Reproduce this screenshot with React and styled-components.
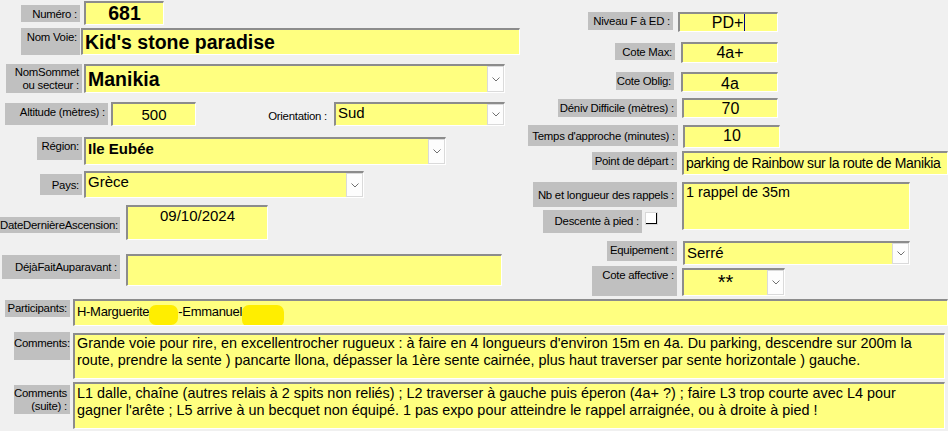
import React from "react";
import styled, { createGlobalStyle } from "styled-components";

const GlobalStyle = createGlobalStyle`
  html, body {
    margin: 0;
    padding: 0;
    background: #f0f0f0;
    overflow: hidden;
  }
`;

const Form = styled.div`
  width: 948px;
  height: 431px;
  background: #f0f0f0;
  display: flex;
  flex-direction: column;
`;

const Top = styled.div`
  display: flex;
  height: 293px;
`;

const Column = styled.div`
  display: flex;
  flex-direction: column;
  width: ${(p) => p.$w}px;
  flex-shrink: 0;
`;

const Row = styled.div`
  display: flex;
  align-items: flex-start;
  margin-top: ${(p) => p.$mt || 0}px;
`;

const Label = styled.div`
  box-sizing: border-box;
  flex-shrink: 0;
  width: ${(p) => p.$w}px;
  height: ${(p) => p.$h}px;
  margin-left: ${(p) => p.$ml || 0}px;
  margin-top: ${(p) => p.$dy || 0}px;
  padding: ${(p) => p.$pt ?? 3}px 3px 0 0;
  background: ${(p) => (p.$plain ? "transparent" : "#c0c0c0")};
  font-family: "Liberation Sans", Arial, sans-serif;
  font-size: 11.4px;
  letter-spacing: -0.25px;
  line-height: 13px;
  color: #000;
  text-align: right;
  white-space: nowrap;
`;

const Field = styled.div`
  box-sizing: border-box;
  flex-shrink: 0;
  width: ${(p) => p.$w}px;
  height: ${(p) => p.$h}px;
  margin-left: ${(p) => p.$ml || 0}px;
  margin-top: ${(p) => p.$dy || 0}px;
  background: #ffff80;
  border-top: 2px solid #8c8c8c;
  border-left: 2px solid #8c8c8c;
  border-right: 1px solid #ffffff;
  border-bottom: 1px solid #ffffff;
  display: flex;
  align-items: stretch;
  overflow: hidden;
  font-family: "Liberation Sans", Arial, sans-serif;
  font-size: ${(p) => p.$size || 15}px;
  font-weight: ${(p) => (p.$bold ? 700 : 400)};
  color: #000;
`;

const Value = styled.div`
  flex: 1;
  padding: ${(p) => p.$pt ?? 1}px 2px 0 ${(p) => p.$pl ?? 2}px;
  text-align: ${(p) => p.$align || "left"};
  line-height: ${(p) => p.$lh || 17}px;
  white-space: ${(p) => (p.$wrap ? "pre" : "nowrap")};
  letter-spacing: ${(p) => p.$ls || 0}px;
`;

const Caret = styled.span`
  display: inline-block;
  width: 0;
  height: 17px;
  border-left: 1px solid #000080;
  vertical-align: top;
  margin-left: 1px;
`;

const DropButton = styled.div`
  box-sizing: border-box;
  flex-shrink: 0;
  width: 17px;
  background: #fdfdfd;
  border: 1px solid #dadada;
  display: flex;
  align-items: center;
  justify-content: center;
`;

const Blot = styled.span`
  display: inline-block;
  vertical-align: top;
  width: ${(p) => p.$w}px;
  height: ${(p) => p.$h}px;
  margin-top: 2px;
  background: #ffee00;
  border-radius: 7px;
`;

const Stack = styled.div`
  display: flex;
  flex-direction: column;
  align-items: flex-end;
  width: ${(p) => p.$w}px;
  margin-left: ${(p) => p.$ml || 0}px;
  flex-shrink: 0;
`;

const SubRow = styled.div`
  display: flex;
  align-items: flex-start;
  width: 100%;
  margin-top: ${(p) => p.$mt || 0}px;
`;

const CheckBox = styled.div`
  box-sizing: border-box;
  width: 13px;
  height: 13px;
  margin-left: 3px;
  margin-top: 2px;
  background: #ffffff;
  border: 1px solid #d8d8d8;
  box-shadow: inset -2px -2px 0 -1px #000;
`;

const Bottom = styled.div`
  display: flex;
  flex-direction: column;
  margin-top: 6px;
`;

function Chevron() {
  return (
    <svg width="8" height="5" viewBox="0 0 8 5">
      <polyline points="0.5,0.5 4,4 7.5,0.5" fill="none" stroke="#707070" strokeWidth="1" />
    </svg>
  );
}

function Combo({ children, ...props }) {
  return (
    <Field {...props}>
      {children}
      <DropButton>
        <Chevron />
      </DropButton>
    </Field>
  );
}

export default function App() {
  return (
    <>
      <GlobalStyle />
      <Form>
        <Top>
          <Column $w={520}>
            <Row $mt={1}>
              <Label $ml={21} $w={59} $h={17} $dy={4}>Numéro :</Label>
              <Field $ml={4} $w={80} $h={24} $size={19.5} $bold>
                <Value $align="center" $lh={21} $pt={0}>681</Value>
              </Field>
            </Row>
            <Row $mt={3}>
              <Label $ml={21} $w={59} $h={27}>Nom Voie:</Label>
              <Field $ml={1} $w={439} $h={27} $size={19.5} $bold>
                <Value $lh={22} $pt={1}>Kid's stone paradise</Value>
              </Field>
            </Row>
            <Row $mt={9}>
              <Label $ml={6} $w={76} $h={29} $pt={2}>
                NomSommet
                <br />
                ou secteur :
              </Label>
              <Combo $ml={2} $w={421} $h={29} $size={19.5} $bold>
                <Value $lh={22} $pt={2}>Manikia</Value>
              </Combo>
            </Row>
            <Row $mt={9}>
              <Label $ml={5} $w={103} $h={22} $dy={1}>Altitude (mètres) :</Label>
              <Field $ml={3} $w={85} $h={24}>
                <Value $align="center" $pt={2}>500</Value>
              </Field>
              <Label $plain $ml={70} $w={64} $h={18} $dy={5}>Orientation :</Label>
              <Combo $ml={4} $w={171} $h={24}>
                <Value $pt={0}>Sud</Value>
              </Combo>
            </Row>
            <Row $mt={11}>
              <Label $ml={37} $w={45} $h={23}>Région:</Label>
              <Combo $ml={2} $w={362} $h={28} $bold>
                <Value $pt={1}>Ile Eubée</Value>
              </Combo>
            </Row>
            <Row $mt={6}>
              <Label $ml={40} $w={42} $h={21} $dy={3} $pt={5}>Pays:</Label>
              <Combo $ml={2} $w={280} $h={27}>
                <Value $pt={0}>Grèce</Value>
              </Combo>
            </Row>
            <Row $mt={7}>
              <Label $ml={0} $w={120} $h={16} $dy={12} $pt={2}>DateDernièreAscension:</Label>
              <Field $ml={6} $w={142} $h={35}>
                <Value $align="center" $pt={0}>09/10/2024</Value>
              </Field>
            </Row>
            <Row $mt={14}>
              <Label $ml={2} $w={118} $h={24} $dy={1} $pt={6}>DéjàFaitAuparavant :</Label>
              <Field $ml={6} $w={376} $h={32}>
                <Value />
              </Field>
            </Row>
          </Column>

          <Column $w={428}>
            <Row $mt={12}>
              <Label $ml={68} $w={85} $h={18}>Niveau F à ED :</Label>
              <Field $ml={5} $w={100} $h={20} $size={16}>
                <Value $align="center" $pt={0}>
                  PD+
                  <Caret />
                </Value>
              </Field>
            </Row>
            <Row $mt={10}>
              <Label $ml={95} $w={60} $h={17} $dy={1}>Cote Max:</Label>
              <Field $ml={6} $w={97} $h={21} $size={16}>
                <Value $align="center" $pt={0}>4a+</Value>
              </Field>
            </Row>
            <Row $mt={9}>
              <Label $ml={96} $w={58} $h={18}>Cote Oblig:</Label>
              <Field $ml={7} $w={97} $h={20} $size={16}>
                <Value $align="center" $pt={1}>4a</Value>
              </Field>
            </Row>
            <Row $mt={6}>
              <Label $ml={38} $w={119} $h={18} $dy={1}>Déniv Difficile (mètres) :</Label>
              <Field $ml={5} $w={96} $h={20} $size={16}>
                <Value $align="center" $pt={0}>70</Value>
              </Field>
            </Row>
            <Row $mt={7}>
              <Label $ml={8} $w={150} $h={21} $pt={5}>Temps d'approche (minutes) :</Label>
              <Field $ml={5} $w={97} $h={23} $size={16}>
                <Value $align="center" $pt={0}>10</Value>
              </Field>
            </Row>
            <Row $mt={3}>
              <Label $ml={72} $w={85} $h={18} $dy={1}>Point de départ :</Label>
              <Field $ml={5} $w={266} $h={24} $size={14}>
                <Value $pt={2} $ls={-0.35}>parking de Rainbow sur la route de Manikia</Value>
              </Field>
            </Row>
            <Row $mt={7}>
              <Stack $ml={13} $w={144}>
                <Label $w={144} $h={25} $pt={7}>Nb et longueur des rappels :</Label>
                <SubRow $mt={3}>
                  <Label $ml={10} $w={99} $h={23} $pt={5}>Descente à pied :</Label>
                  <CheckBox />
                </SubRow>
              </Stack>
              <Field $ml={5} $w={228} $h={48} $size={14.4}>
                <Value $pt={0}>1 rappel de 35m</Value>
              </Field>
            </Row>
            <Row $mt={8}>
              <Label $ml={87} $w={70} $h={20}>Equipement :</Label>
              <Combo $ml={6} $w={227} $h={24}>
                <Value $pt={1}>Serré</Value>
              </Combo>
            </Row>
            <Row $mt={1}>
              <Label $ml={72} $w={85} $h={30}>Cote affective :</Label>
              <Combo $ml={5} $w={103} $h={28} $dy={2} $size={20}>
                <Value $align="center" $pt={2} $lh={20}>**</Value>
              </Combo>
            </Row>
          </Column>
        </Top>

        <Bottom>
          <Row>
            <Label $ml={5} $w={65} $h={17} $dy={1} $pt={2}>Participants:</Label>
            <Field $ml={3} $w={875} $h={27} $size={13}>
              <Value $pt={2} $ls={-0.3}>
                H-Marguerite
                <Blot $w={29} $h={20} />
                -Emmanuel
                <Blot $w={42} $h={22} />
              </Value>
            </Field>
          </Row>
          <Row $mt={6}>
            <Label $ml={14} $w={56} $h={28} $pt={5}>Comments:</Label>
            <Field $ml={3} $w={872} $h={46} $dy={1} $size={14.4}>
              <Value $wrap $pt={0}>
                {"Grande voie pour rire, en excellentrocher rugueux : à faire en 4 longueurs d'environ 15m en 4a. Du parking, descendre sur 200m la\nroute, prendre la sente ) pancarte llona, dépasser la 1ère sente cairnée, plus haut traverser par sente horizontale ) gauche."}
              </Value>
            </Field>
          </Row>
          <Row $mt={3}>
            <Label $ml={14} $w={56} $h={29} $dy={3} $pt={2}>
              Comments
              <br />
              (suite) :
            </Label>
            <Field $ml={3} $w={872} $h={47} $size={14.4}>
              <Value $wrap $pt={1}>
                {"L1 dalle, chaîne (autres relais à 2 spits non reliés) ; L2 traverser à gauche puis éperon (4a+ ?) ; faire L3 trop courte avec L4 pour\ngagner l'arête ; L5 arrive à un becquet non équipé. 1 pas expo pour atteindre le rappel arraignée, ou à droite à pied !"}
              </Value>
            </Field>
          </Row>
        </Bottom>
      </Form>
    </>
  );
}
